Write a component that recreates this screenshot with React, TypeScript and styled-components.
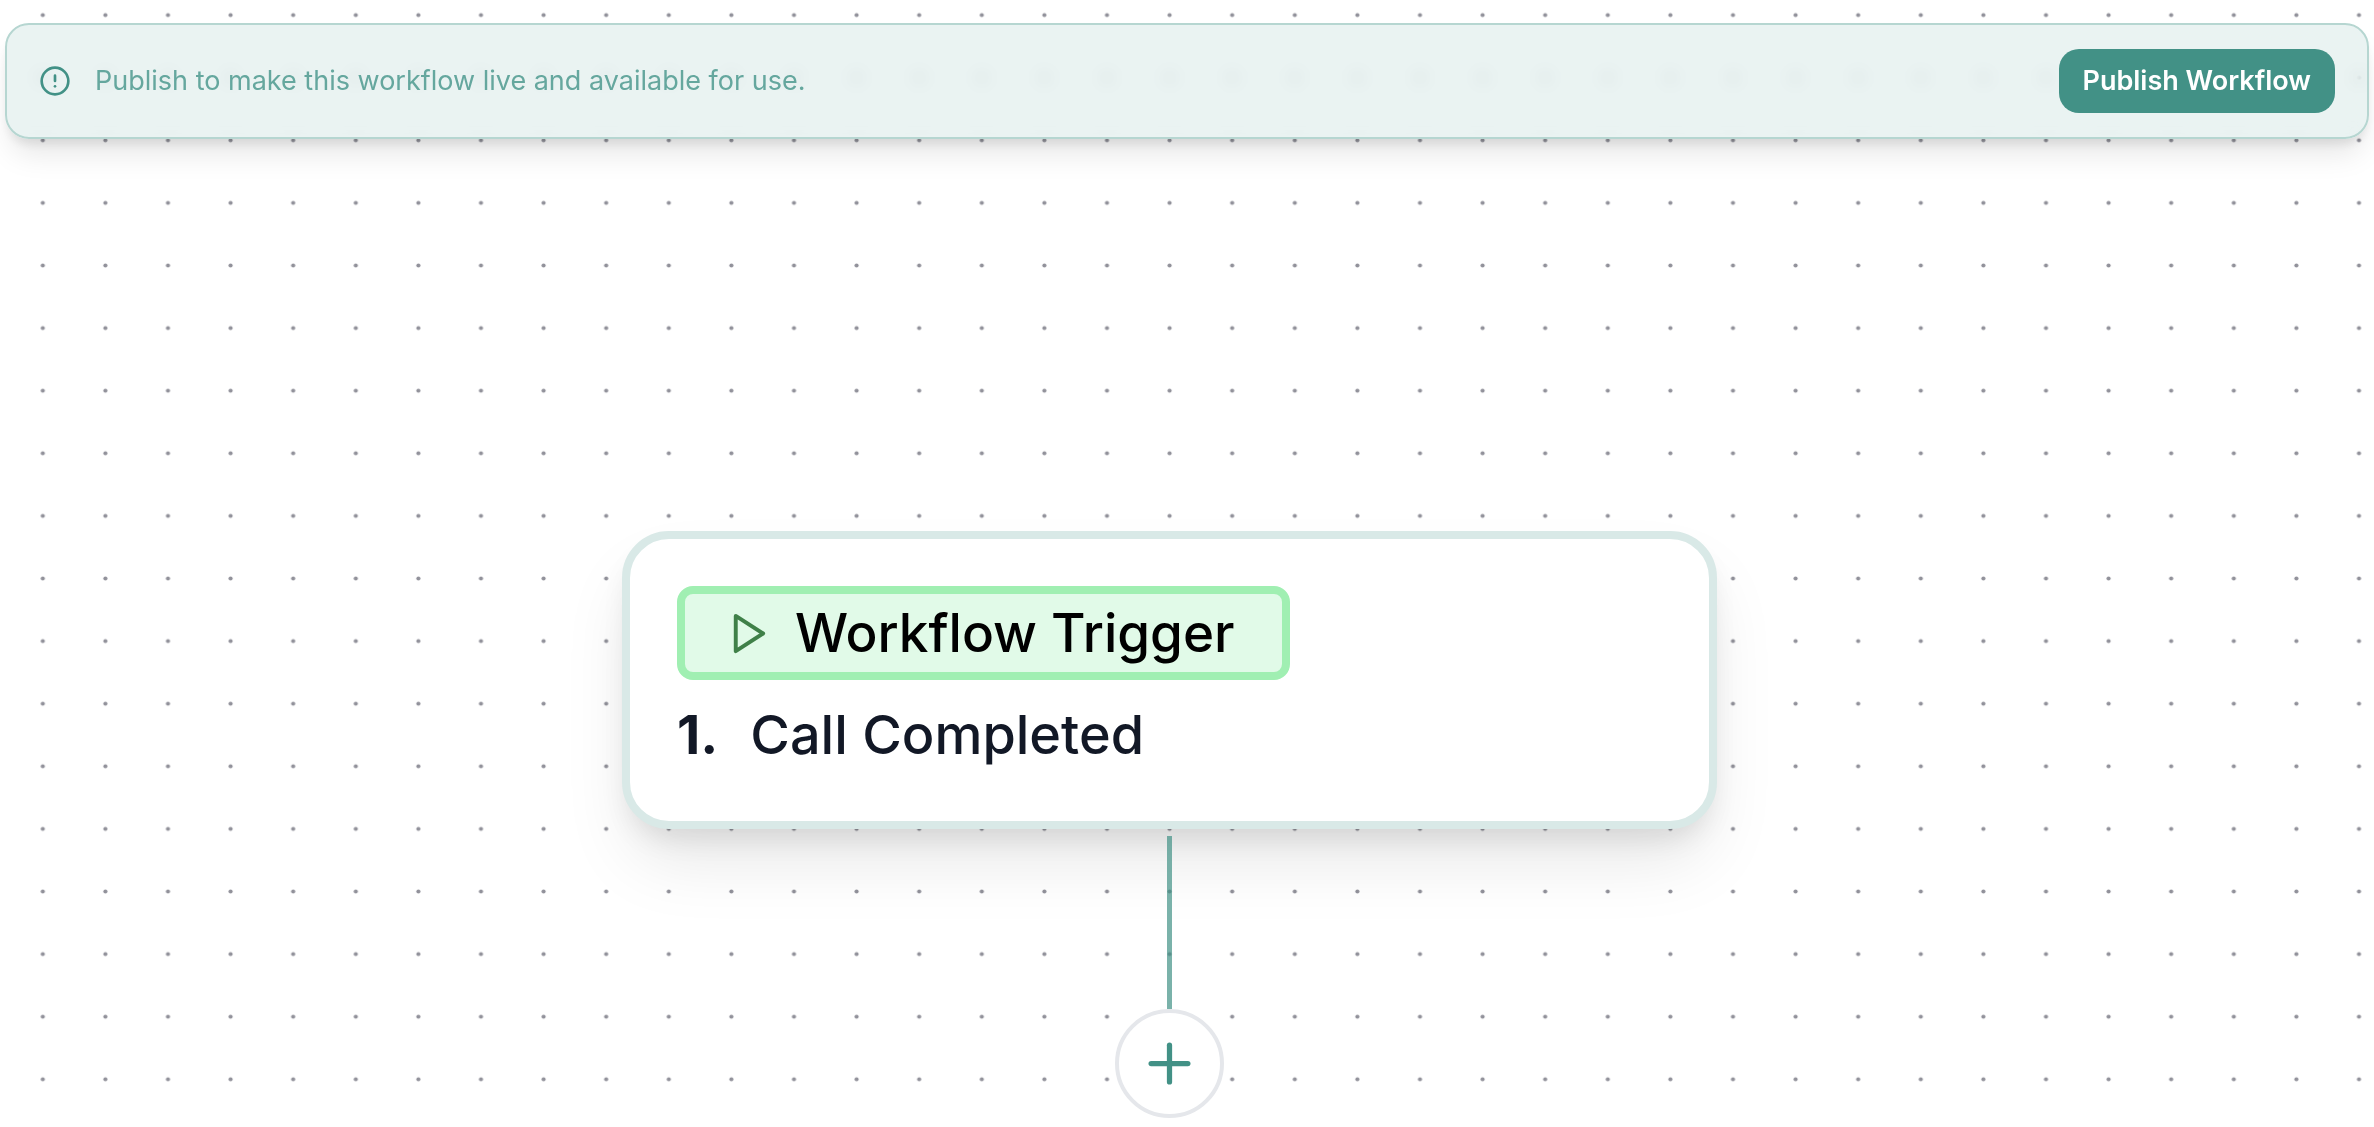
import React from "react";
import styled, { createGlobalStyle } from "styled-components";
import { CircleAlert, Plus } from "lucide-react";

const TEAL = "#429186";

const GlobalStyle = createGlobalStyle`
  *, *::before, *::after { box-sizing: border-box; }
  body {
    margin: 0;
    background: #fff;
    font-family: Inter, "Liberation Sans", sans-serif;
  }
  button { font-family: inherit; cursor: pointer; }
`;

const Page = styled.main`
  position: relative;
  min-height: 100vh;
  padding: 23px 5px;
  overflow: hidden;
`;

const Grid = styled.svg`
  position: absolute;
  inset: 0;
  width: 100%;
  height: 100%;
`;

const Banner = styled.section`
  position: relative;
  z-index: 1;
  display: flex;
  align-items: center;
  justify-content: space-between;
  padding: 24px 32px;
  border: 2px solid #b6d6d1;
  border-radius: 24px;
  background: rgba(66, 145, 134, 0.11);
  backdrop-filter: blur(8px);
  box-shadow: 0 20px 30px -6px rgba(0, 0, 0, 0.1), 0 8px 12px -4px rgba(0, 0, 0, 0.1);
`;

const Notice = styled.div`
  display: flex;
  align-items: center;
  gap: 24px;
  color: ${TEAL};
`;

const NoticeText = styled.p`
  margin: 0;
  font-size: 27px;
  line-height: 40px;
  color: #65a79e;
`;

const PublishButton = styled.button`
  height: 64px;
  padding: 0 24px;
  border: 0;
  border-radius: 20px;
  background: ${TEAL};
  color: #fff;
  font-size: 27px;
  font-weight: 600;
  line-height: 40px;
`;

/* Placed at the node's coordinates on the free canvas. */
const NodeStack = styled.div<{ $x: number; $y: number }>`
  position: absolute;
  left: ${(p) => p.$x}px;
  top: ${(p) => p.$y}px;
  display: flex;
  flex-direction: column;
  align-items: center;
`;

const TriggerCard = styled.article`
  display: flex;
  flex-direction: column;
  align-items: flex-start;
  gap: 16px;
  width: 1095px;
  padding: 47px;
  border: 8px solid #d9e9e7;
  border-radius: 47px;
  background: #fff;
  box-shadow: 0 39px 70px -10px rgba(0, 0, 0, 0.1), 0 16px 28px -8px rgba(0, 0, 0, 0.1);
`;

const Badge = styled.div`
  display: flex;
  align-items: center;
  gap: 24px;
  padding: 0 47px 0 39px;
  border: 8px solid #a0efb2;
  border-radius: 16px;
  background: #e1fae8;
  color: #3f8048;
`;

const BadgeLabel = styled.h2`
  margin: 0;
  font-size: 53px;
  font-weight: 500;
  line-height: 78px;
  color: #000;
`;

const TriggerList = styled.ol`
  margin: 0;
  padding: 0;
  list-style: none;
`;

const TriggerItem = styled.li`
  display: flex;
  gap: 32px;
  font-size: 54px;
  font-weight: 500;
  line-height: 78px;
  color: #121826;
`;

const Index = styled.span`
  font-weight: 700;
`;

const Connector = styled.div`
  width: 5px;
  height: 173px;
  margin-top: 7px;
  background: rgba(66, 145, 134, 0.7);
`;

const AddButton = styled.button`
  display: flex;
  align-items: center;
  justify-content: center;
  width: 109px;
  height: 109px;
  padding: 0;
  border: 4px solid #e5e7eb;
  border-radius: 50%;
  background: #fff;
  color: ${TEAL};
`;

function DotGrid() {
  return (
    <Grid aria-hidden="true">
      <pattern id="dots" x="11.5" y="-16.2" width="62.6" height="62.6" patternUnits="userSpaceOnUse">
        <circle cx="31.3" cy="31.3" r="2.1" fill="#91919a" />
      </pattern>
      <rect width="100%" height="100%" fill="url(#dots)" />
    </Grid>
  );
}

function PlayIcon() {
  return (
    <svg
      width="47"
      height="47"
      viewBox="0 0 24 24"
      fill="none"
      stroke="currentColor"
      strokeWidth="2"
      strokeLinecap="round"
      strokeLinejoin="round"
      aria-hidden="true"
    >
      <polygon points="6 3 20 12 6 21 6 3" />
    </svg>
  );
}

export default function App() {
  return (
    <Page>
      <GlobalStyle />
      <DotGrid />
      <Banner>
        <Notice>
          <CircleAlert size={32} />
          <NoticeText>Publish to make this workflow live and available for use.</NoticeText>
        </Notice>
        <PublishButton type="button">Publish Workflow</PublishButton>
      </Banner>
      <NodeStack $x={622} $y={531}>
        <TriggerCard>
          <Badge>
            <PlayIcon />
            <BadgeLabel>Workflow Trigger</BadgeLabel>
          </Badge>
          <TriggerList>
            <TriggerItem>
              <Index>1.</Index>
              <span>Call Completed</span>
            </TriggerItem>
          </TriggerList>
        </TriggerCard>
        <Connector />
        <AddButton type="button" aria-label="Add step">
          <Plus size={63} />
        </AddButton>
      </NodeStack>
    </Page>
  );
}
